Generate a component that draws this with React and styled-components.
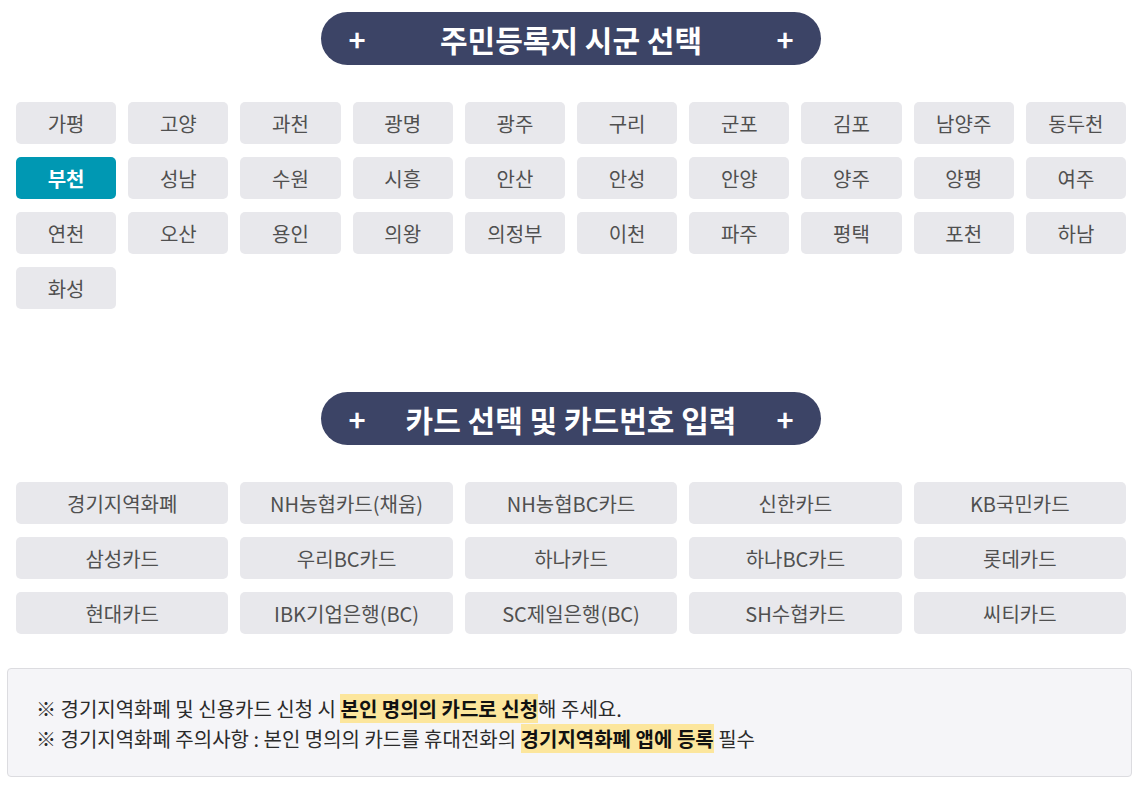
import { useState } from "react";
import styled, { createGlobalStyle } from "styled-components";

const cities = [
    "가평", "고양", "과천", "광명", "광주", "구리", "군포", "김포", "남양주", "동두천",
    "부천", "성남", "수원", "시흥", "안산", "안성", "안양", "양주", "양평", "여주",
    "연천", "오산", "용인", "의왕", "의정부", "이천", "파주", "평택", "포천", "하남",
    "화성"
];

const cards = [
    "경기지역화폐", "NH농협카드(채움)", "NH농협BC카드", "신한카드", "KB국민카드",
    "삼성카드", "우리BC카드", "하나카드", "하나BC카드", "롯데카드",
    "현대카드", "IBK기업은행(BC)", "SC제일은행(BC)", "SH수협카드", "씨티카드"
];

export default function App() {
    const [city, setCity] = useState("부천");
    const [card, setCard] = useState(null);

    return (
        <>
            <GlobalStyle />
            <Page>
                <SectionTitle>
                    <span>+</span>
                    <h2>주민등록지 시군 선택</h2>
                    <span>+</span>
                </SectionTitle>

                <CityGrid>
                    {cities.map((name) => (
                        <Choice key={name} selected={city === name} onClick={() => setCity(name)}>
                            {name}
                        </Choice>
                    ))}
                </CityGrid>

                <SectionTitle spaced>
                    <span>+</span>
                    <h2>카드 선택 및 카드번호 입력</h2>
                    <span>+</span>
                </SectionTitle>

                <CardGrid>
                    {cards.map((name) => (
                        <Choice key={name} selected={card === name} onClick={() => setCard(name)}>
                            {name}
                        </Choice>
                    ))}
                </CardGrid>

                <Notice>
                    <p>※ 경기지역화폐 및 신용카드 신청 시 <Mark>본인 명의의 카드로 신청</Mark>해 주세요.</p>
                    <p>※ 경기지역화폐 주의사항 : 본인 명의의 카드를 휴대전화의 <Mark>경기지역화폐 앱에 등록</Mark> 필수</p>
                </Notice>
            </Page>
        </>
    )
}

const GlobalStyle = createGlobalStyle`
    * {
        box-sizing: border-box;
        margin: 0;
        padding: 0;
    }
    body {
        background-color: #FFFFFF;
        font-family: "Noto Sans CJK KR", "Noto Sans", sans-serif;
    }
`

const Page = styled.div`
    width: 1145px;
    padding: 12px 19px 10px 16px;
    display: flex;
    flex-direction: column;
`

const SectionTitle = styled.div`
    width: 500px;
    height: 53px;
    margin: ${props => props.spaced ? "83px" : "0"} auto 37px;
    border-radius: 27px;
    background-color: #3C4466;
    color: #FFFFFF;
    padding: 0 25px 0 25px;
    display: flex;
    justify-content: space-between;
    align-items: center;

    span {
        width: 22px;
        font-size: 29px;
        font-weight: 700;
        text-align: center;
        line-height: 1;
    }
    h2 {
        font-size: 30px;
        font-weight: 700;
        line-height: 1;
    }
`

const CityGrid = styled.div`
    display: grid;
    grid-template-columns: repeat(10, 1fr);
    grid-auto-rows: 42px;
    column-gap: 12px;
    row-gap: 13px;
`

const CardGrid = styled(CityGrid)`
    grid-template-columns: repeat(5, 1fr);
`

const Choice = styled.button`
    border: none;
    border-radius: 5px;
    background-color: ${props => props.selected ? "#0098B3" : "#E8E8EC"};
    color: ${props => props.selected ? "#FFFFFF" : "#505050"};
    font-family: inherit;
    font-size: 20px;
    font-weight: ${props => props.selected ? 700 : 400};
    cursor: pointer;
    display: flex;
    justify-content: center;
    align-items: center;
`

const Notice = styled.div`
    margin: 34px -6px 0 -9px;
    height: 109px;
    border: 1px solid #DCDCE0;
    border-radius: 4px;
    background-color: #F5F5F8;
    padding: 25px 28px 0;

    p {
        font-size: 20px;
        line-height: 30px;
        color: #2B2B2B;
    }
`

const Mark = styled.strong`
    font-weight: 700;
    color: #111111;
    background-color: #FCE69D;
`
